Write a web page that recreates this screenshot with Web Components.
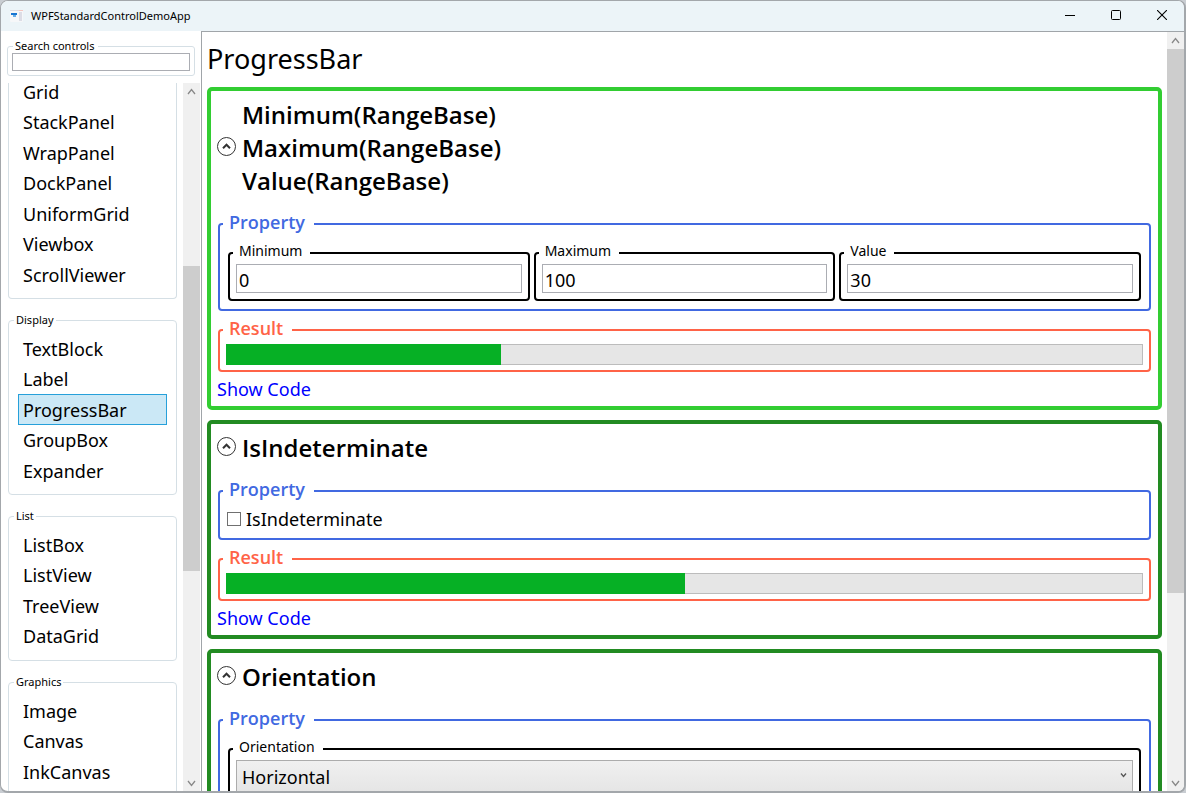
<!DOCTYPE html>
<html lang="en">
<head>
<meta charset="utf-8">
<title>WPFStandardControlDemoApp</title>
<style>
  html, body { height: 100%; margin: 0; }
  body {
    background: #c9cdd2;
    color: #000;
    font-family: "Noto Sans", "Open Sans", sans-serif;
    font-size: 18px;
    overflow: hidden;
  }
</style>
</head>
<body>
<demo-app></demo-app>

<script>
function define(name, html, setup) {
  const template = document.createElement('template');
  template.innerHTML = '<style>*{box-sizing:border-box}</style>' + html;
  customElements.define(name, class extends HTMLElement {
    constructor() {
      super();
      const root = this.attachShadow({ mode: 'open' });
      root.appendChild(template.content.cloneNode(true));
      if (setup) setup(this, root);
    }
  });
}
const text = (root, id, value) => { root.getElementById(id).textContent = value; };

/* Title bar with the caption buttons */
define('title-bar', `
<style>
  :host { display: flex; align-items: center; height: 30px; background: #ecf4f8; }
  svg { display: block; }
  .logo { margin: 0 7px 0 9px; }
  h1 { flex: 1; margin: 0; font: inherit; line-height: 16px; font-size: 11px; }
  button { width: 46px; height: 30px; padding: 0 0 0 2px; border: 0; background: none; display: grid; place-items: center; }
  button svg { margin-bottom: 2px; }
</style>
<svg class="logo" width="14" height="14" viewBox="0 0 14 14" aria-hidden="true">
  <rect x="0" y="1" width="13" height="12" rx="1" fill="#f6f7f9"/>
  <path d="M0 1.5h9" stroke="#dcdde3"/>
  <rect x="1" y="4" width="6" height="2" fill="#1976d2"/>
  <rect x="3" y="6" width="3" height="2" fill="#6aaee6"/>
  <rect x="9" y="3" width="3" height="9" fill="#dcdde6"/>
  <path d="M9 1.5h4" stroke="#f4c6c0"/>
</svg>
<h1>WPFStandardControlDemoApp</h1>
<button aria-label="Minimize"><svg width="10" height="10"><path d="M0 5.5h10" stroke="#000"/></svg></button>
<button aria-label="Maximize"><svg width="10" height="10"><rect x=".5" y=".5" width="9" height="9" rx="1" fill="none" stroke="#000"/></svg></button>
<button aria-label="Close"><svg width="10" height="10"><path d="M0 0l10 10M10 0L0 10" stroke="#000" stroke-width="1.1"/></svg></button>
`);

/* Vertical scroll bar; --before and --after share out the track round the thumb */
define('scroll-bar', `
<style>
  :host { display: flex; flex-direction: column; width: 17px; flex: none; background: #f0f0f0; }
  svg { display: block; flex: none; width: 17px; height: 17px; }
  path { fill: none; stroke: #888; stroke-width: 1.3; }
  .before { flex: var(--before) 0 0; }
  .thumb { flex: var(--thumb) 0 0; background: #cdcdcd; }
  .after { flex: var(--after) 0 0; }
</style>
<svg viewBox="0 0 17 17"><path d="M5 11l3.5-4.5L12 11"/></svg>
<div class="before"></div><div class="thumb"></div><div class="after"></div>
<svg viewBox="0 0 17 17"><path d="M5 7l3.5 4.5L12 7"/></svg>
`);

/* Search box */
define('search-box', `
<style>
  :host { display: block; }
  fieldset { margin: 0; padding: 0 4px 4px; border: 1px solid #d5dfe5; border-radius: 3px; min-width: 0; }
  legend { margin-left: 1px; padding: 0 4px 0 2px; font-size: 11px; line-height: 14px; }
  input { display: block; width: 100%; height: 18px; padding: 0 2px; border: 1px solid #abadb3; border-radius: 0; background: #fff; font: inherit; font-size: 12px; outline: 0; }
</style>
<fieldset><legend><label for="q">Search controls</label></legend><input id="q" type="text"></fieldset>
`);

/* A captioned list of control names */
define('nav-group', `
<style>
  :host { display: block; }
  fieldset { margin: 0; padding: 6px 9px 9px; border: 1px solid #d5dfe5; border-radius: 4px; min-width: 0; }
  legend { margin-left: -4px; padding: 0 2px; font-size: 11px; line-height: 14px; }
  fieldset.open { border-top: 0; padding-top: 0; }
  ul { list-style: none; margin: 0; padding: 0; display: grid; grid-auto-rows: 30px 31px; }
  a { display: block; height: 31px; line-height: 30px; padding: 0 4px; border: 1px solid transparent; color: #000; text-decoration: none; }
  a[aria-current] { background: #cbe8f6; border-color: #26a0da; }
</style>
<fieldset><legend id="caption"></legend><ul id="items"></ul></fieldset>
`, (host, root) => {
  const caption = host.getAttribute('caption');
  if (caption) text(root, 'caption', caption);
  else {
    root.getElementById('caption').remove();
    root.querySelector('fieldset').className = 'open';
  }
  const list = root.getElementById('items');
  for (const name of host.getAttribute('items').split(' ')) {
    const a = document.createElement('a');
    a.href = '#' + name;
    a.textContent = name;
    if (name === host.getAttribute('current')) a.setAttribute('aria-current', 'page');
    const li = document.createElement('li');
    li.append(a);
    list.append(li);
  }
});

/* Coloured frame for the Property and Result parts */
define('group-box', `
<style>
  :host { display: block; --pad: 7px 8px 8px; --ink: #4169e1; }
  :host([kind="check"]) { --pad: 1px 6px 6px; }
  :host([kind="result"]) { --pad: 1px 6px 5px; --ink: #ff6347; }
  fieldset { margin: 0; padding: 0; border: 2px solid var(--ink); border-radius: 4px; min-width: 0; }
  legend { margin-left: 3px; padding: 0 9px 3px 6px; color: var(--ink); font-family: "Open Sans", sans-serif; font-weight: 600; line-height: 23px; font-size: 18px; }
  .content { display: flex; gap: 4px; padding: var(--pad); }
  ::slotted(*) { flex: 1 1 0; min-width: 0; }
</style>
<fieldset><legend id="caption"></legend><div class="content"><slot></slot></div></fieldset>
`, (host, root) => text(root, 'caption', host.getAttribute('caption')));

const FIELD_CSS = `
  :host { display: block; }
  fieldset { margin: 0; padding: 2px 6px 6px; border: 2px solid #000; border-radius: 4px; min-width: 0; }
  legend { margin-left: -3px; padding: 0 8px 4px 6px; font-size: 14px; line-height: 14px; }
`;

define('text-field', `
<style>
  ${FIELD_CSS}
  input { display: block; width: 100%; height: 29px; padding: 2px 2px 0; border: 1px solid #abadb3; border-radius: 0; background: #fff; color: #000; font: inherit; outline: 0; }
</style>
<fieldset><legend><label id="caption" for="field"></label></legend><input id="field" type="text"></fieldset>
`, (host, root) => {
  text(root, 'caption', host.getAttribute('caption'));
  root.getElementById('field').value = host.getAttribute('value');
});

define('select-field', `
<style>
  ${FIELD_CSS}
  .box { display: grid; align-items: center; }
  select, svg { grid-area: 1 / 1; }
  select { appearance: none; width: 100%; height: 34px; padding: 0 5px; border: 1px solid #acacac; border-radius: 0; background: linear-gradient(#f0f0f0, #e5e5e5); color: #000; font: inherit; outline: 0; }
  svg { justify-self: end; align-self: start; margin: 12px 6px; pointer-events: none; }
</style>
<fieldset><legend><label id="caption" for="field"></label></legend>
  <div class="box"><select id="field"><option id="value"></option></select>
  <svg width="7" height="7" viewBox="0 0 7 7"><path d="M1 1.5l2.5 3L6 1.5" fill="none" stroke="#555" stroke-width="1.3"/></svg></div>
</fieldset>
`, (host, root) => {
  text(root, 'caption', host.getAttribute('caption'));
  text(root, 'value', host.getAttribute('value'));
});

define('check-field', `
<style>
  :host { display: flex; align-items: center; height: 27px; gap: 5px; padding-left: 1px; }
  input { appearance: none; flex: none; width: 14px; height: 14px; margin: 0; border: 1px solid #707070; background: #fff; }
</style>
<input id="field" type="checkbox"><label id="caption" for="field"></label>
`, (host, root) => text(root, 'caption', host.getAttribute('caption')));

define('progress-meter', `
<style>
  :host { display: block; }
  progress { appearance: none; display: block; width: 100%; height: 21px; border: 0; }
  ::-webkit-progress-bar { background: #e6e6e6; box-shadow: inset 0 0 0 1px #bcbcbc; }
  ::-webkit-progress-value { background: #06b025; }
</style>
<progress id="bar" max="100" aria-label="Result"></progress>
`, (host, root) => { root.getElementById('bar').value = Number(host.getAttribute('value')); });

/* Collapsible card; the "code" attribute adds the link to its source */
define('demo-card', `
<style>
  :host { display: block; flex: none; border: 4px solid #228b22; border-radius: 5px; padding: 7px 7px 4px; }
  :host([active]) { border-color: #32cd32; }
  header { display: flex; align-items: center; gap: 6px; margin-bottom: 14px; }
  button { flex: none; width: 19px; height: 19px; margin: 0 0 2px -1px; padding: 0; border: 0; background: none; }
  svg { display: block; }
  h3 { margin: 0; font-family: "Open Sans", sans-serif; font-size: 24px; font-weight: 600; line-height: 33px; white-space: pre-line; }
  .parts { display: flex; flex-direction: column; gap: 6px; }
  a { display: block; width: fit-content; margin: 4px 0 0 -1px; line-height: 26px; color: #00f; text-decoration: none; }
  :host(:not([code])) a { display: none; }
</style>
<header>
  <button aria-label="Collapse" aria-expanded="true"><svg width="19" height="19" viewBox="0 0 19 19"><circle cx="9.5" cy="9.5" r="9" fill="#fff" stroke="#333"/><path d="M6 11.2l3.5-3.5 3.5 3.5" fill="none" stroke="#333" stroke-width="2"/></svg></button>
  <h3 id="title"></h3>
</header>
<div class="parts"><slot></slot></div>
<a href="#code">Show Code</a>
`, (host, root) => text(root, 'title', host.getAttribute('heading').split(' ').join('\n')));

define('side-bar', `
<style>
  :host { display: flex; flex-direction: column; flex: none; width: 200px; padding: 8px 1px 0 0; }
  search-box { margin: 0 5px 7px 6px; }
  .pane { flex: 1; min-height: 0; display: flex; overflow: hidden; }
  nav { flex: 1; min-width: 0; overflow: hidden; padding: 0 6px 0 7px; }
  .groups { display: flex; flex-direction: column; gap: 14px; margin-top: -7px; }
  scroll-bar { --before: 166; --thumb: 305; --after: 203; }
</style>
<search-box></search-box>
<div class="pane">
  <nav aria-label="Controls"><div class="groups">
    <nav-group items="Grid StackPanel WrapPanel DockPanel UniformGrid Viewbox ScrollViewer"></nav-group>
    <nav-group caption="Display" items="TextBlock Label ProgressBar GroupBox Expander" current="ProgressBar"></nav-group>
    <nav-group caption="List" items="ListBox ListView TreeView DataGrid"></nav-group>
    <nav-group caption="Graphics" items="Image Canvas InkCanvas"></nav-group>
  </div></nav>
  <scroll-bar></scroll-bar>
</div>
`);

define('demo-page', `
<style>
  :host { display: flex; flex: 1; min-width: 0; border: solid #a0a5a9; border-width: 1px 0 0 1px; }
  main { flex: 1; min-width: 0; overflow: hidden; display: flex; flex-direction: column; gap: 10px; padding: 8px 5px 0; }
  h2 { margin: 0; font-size: 27px; font-weight: 400; line-height: 37px; }
  scroll-bar { --before: 0; --thumb: 544; --after: 181; }
</style>
<main>
  <h2>ProgressBar</h2>
  <demo-card active code heading="Minimum(RangeBase) Maximum(RangeBase) Value(RangeBase)">
    <group-box caption="Property">
      <text-field caption="Minimum" value="0"></text-field>
      <text-field caption="Maximum" value="100"></text-field>
      <text-field caption="Value" value="30"></text-field>
    </group-box>
    <group-box caption="Result" kind="result"><progress-meter value="30"></progress-meter></group-box>
  </demo-card>
  <demo-card code heading="IsIndeterminate">
    <group-box caption="Property" kind="check"><check-field caption="IsIndeterminate"></check-field></group-box>
    <group-box caption="Result" kind="result"><progress-meter value="50"></progress-meter></group-box>
  </demo-card>
  <demo-card heading="Orientation">
    <group-box caption="Property"><select-field caption="Orientation" value="Horizontal"></select-field></group-box>
  </demo-card>
</main>
<scroll-bar></scroll-bar>
`);

define('demo-app', `
<style>
  :host { display: flex; flex-direction: column; box-sizing: border-box; height: 100vh; border: 1px solid #a3a7ab; border-width: 1px 2px 2px 1px; border-radius: 8px; overflow: hidden; background: #fff; }
  .body { flex: 1; min-height: 0; display: flex; }
</style>
<title-bar></title-bar>
<div class="body"><side-bar></side-bar><demo-page></demo-page></div>
`);
</script>
</body>
</html>
